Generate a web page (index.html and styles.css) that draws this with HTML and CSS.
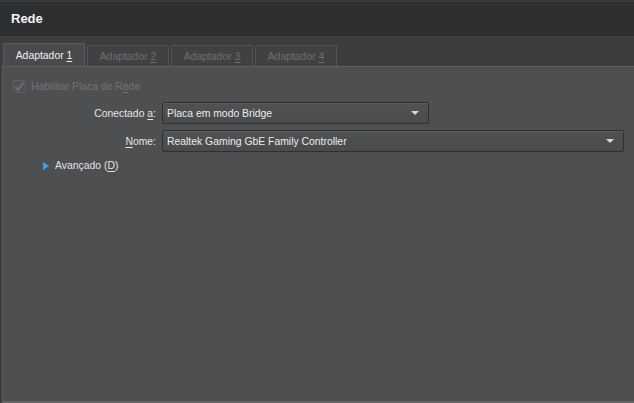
FILE: index.html
```html
<!DOCTYPE html>
<html>
<head>
<meta charset="utf-8">
<link rel="stylesheet" href="styles.css">
</head>
<body>
<div class="window">
  <div class="header"><span class="title">Rede</span></div>
  <div class="tabbar">
    <div class="tab active"><span>Adaptador <u>1</u></span></div>
    <div class="tab"><span>Adaptador <u>2</u></span></div>
    <div class="tab"><span>Adaptador <u>3</u></span></div>
    <div class="tab"><span>Adaptador <u>4</u></span></div>
  </div>
  <div class="panel">
    <div class="check-row">
      <span class="checkbox"><svg width="11" height="11" viewBox="0 0 11 11"><path d="M1.5 5.5 L4 9 L9.5 1.5" fill="none" stroke="#6e6f71" stroke-width="2"/></svg></span>
      <span class="disabled">Habilitar Placa de R<u>e</u>de</span>
    </div>
    <div class="form">
      <label class="lbl">Conectado <u>a</u>:</label>
      <div class="combo short"><span>Placa em modo Bridge</span><span class="arrow"></span></div>
      <label class="lbl"><u>N</u>ome:</label>
      <div class="combo"><span>Realtek Gaming GbE Family Controller</span><span class="arrow"></span></div>
    </div>
    <div class="adv"><span class="tri"></span><span>Avançado (<u>D</u>)</span></div>
  </div>
</div>
</body>
</html>
```
FILE: styles.css
```css
* { box-sizing: border-box; }
html, body { margin: 0; padding: 0; }
body {
  width: 634px; height: 403px; overflow: hidden;
  background: #3c3d3f;
  font-family: "Liberation Sans", Arial, sans-serif;
  font-size: 10.4px;
  color: #e2e2e2;
}
u { text-decoration: underline; text-underline-offset: 2px; }
.window { display: flex; flex-direction: column; height: 403px; }
.header {
  height: 36px;
  background: #2e2f31;
  border-top: 2px solid #38393b;
  border-bottom: 1px solid #2a2b2d;
  padding: 9px 0 0 11px;
}
.title { font-weight: bold; font-size: 13px; color: #f4f4f4; }
.tabbar {
  height: 30px;
  display: flex; align-items: flex-end; gap: 2px;
  padding-left: 3px;
  background: #3c3d3f;
}
.tab {
  width: 82px; height: 21px;
  border: 1px solid #535456; border-bottom: none;
  border-radius: 2px 2px 0 0;
  background: #404143;
  color: #6d6e70;
  display: flex; align-items: center; justify-content: center;
  padding-top: 1px;
}
.tab.active {
  height: 23px;
  background: #494a4c;
  border-color: #5c5d5f;
  color: #f0f0f0;
}
.panel {
  flex: 1;
  background: #4e4f51;
  border-top: 1px solid #5d5e60;
  border-left: 1px solid #5a5b5d;
  border-bottom: 2px solid #636466;
  margin-left: 2px;
  padding: 12px 0 0 10px;
}
.check-row { display: flex; align-items: center; gap: 5px; height: 15px; }
.checkbox {
  width: 13px; height: 13px;
  background: #505153; border: 1px solid #5e5f61;
  display: flex; align-items: center; justify-content: center;
}
.disabled { color: #727375; }
.form {
  margin-top: 8px;
  display: grid;
  grid-template-columns: 143px auto;
  column-gap: 6px; row-gap: 6px;
  align-items: center;
}
.lbl { text-align: right; color: #e4e4e4; }
.combo {
  height: 22px;
  border: 1px solid #2f3032;
  border-radius: 2px;
  background: linear-gradient(#505153, #4a4b4d);
  box-shadow: inset 0 1px 0 #5b5c5e;
  display: flex; align-items: center; justify-content: space-between;
  padding: 0 9px 0 4px;
  color: #ececec;
  width: 462px;
}
.combo.short { width: 267px; }
.arrow {
  width: 0; height: 0;
  border-left: 4px solid transparent; border-right: 4px solid transparent;
  border-top: 4px solid #d8d8d8;
}
.adv { margin-top: 8px; margin-left: 30px; display: flex; align-items: center; gap: 6px; }
.tri {
  width: 0; height: 0;
  border-top: 4px solid transparent; border-bottom: 4px solid transparent;
  border-left: 6px solid #3aa0f0;
}
```
